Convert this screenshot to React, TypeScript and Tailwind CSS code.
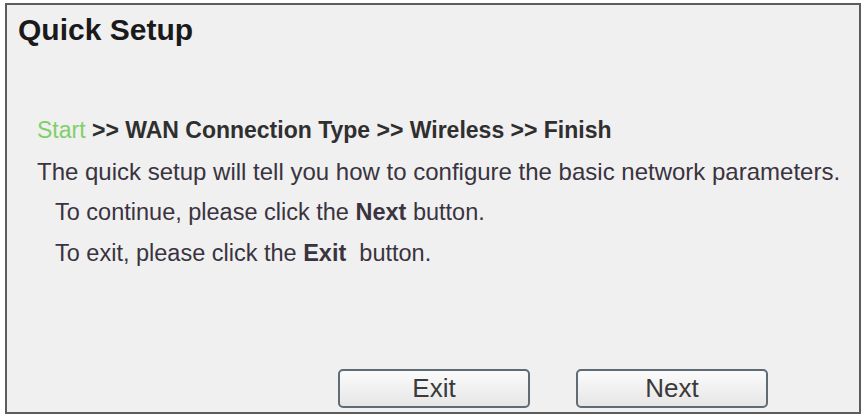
export default function App() {
  return (
    <div className="w-[865px] h-[417px] bg-white pt-[3px] pl-[5px]" style={{ fontFamily: '"Liberation Sans", Arial, sans-serif' }}>
      <div className="w-[856px] h-[411px] border-2 border-[#5c5c5c] bg-[#f0f0f0] flex flex-col">
        <h1 className="pl-[11px] pt-[7px] text-[30px] leading-[36px] font-bold text-[#1a1a1a]">Quick Setup</h1>
        <div className="pl-[30px] mt-[62px] leading-[41px] flex flex-col text-[#333]">
          <p className="text-[23px]">
            <span className="text-[#7fcf6a]">Start</span>
            <span className="font-bold text-[#2f2f2f]"> &gt;&gt; WAN Connection Type &gt;&gt; Wireless &gt;&gt; Finish</span>
          </p>
          <p className="text-[24px] text-[#3a3340]">The quick setup will tell you how to configure the basic network parameters.</p>
          <p className="pl-[18px] text-[23.5px] text-[#3a3340]">
            To continue, please click the <span className="font-bold">Next</span> button.
          </p>
          <p className="pl-[18px] text-[23.5px] text-[#3a3340]">
            To exit, please click the <span className="font-bold">Exit</span>&nbsp; button.
          </p>
        </div>
        <div className="mt-auto mb-[4px] flex gap-[46px] pl-[331px]">
          <button className="w-[192px] h-[39px] rounded-[5px] border-2 border-[#5f6b75] bg-gradient-to-b from-[#fbfbfb] to-[#e6e6e6] text-[26px] leading-[35px] text-[#3a3a3a]">Exit</button>
          <button className="w-[192px] h-[39px] rounded-[5px] border-2 border-[#5f6b75] bg-gradient-to-b from-[#fbfbfb] to-[#e6e6e6] text-[26px] leading-[35px] text-[#3a3a3a]">Next</button>
        </div>
      </div>
    </div>
  );
}
